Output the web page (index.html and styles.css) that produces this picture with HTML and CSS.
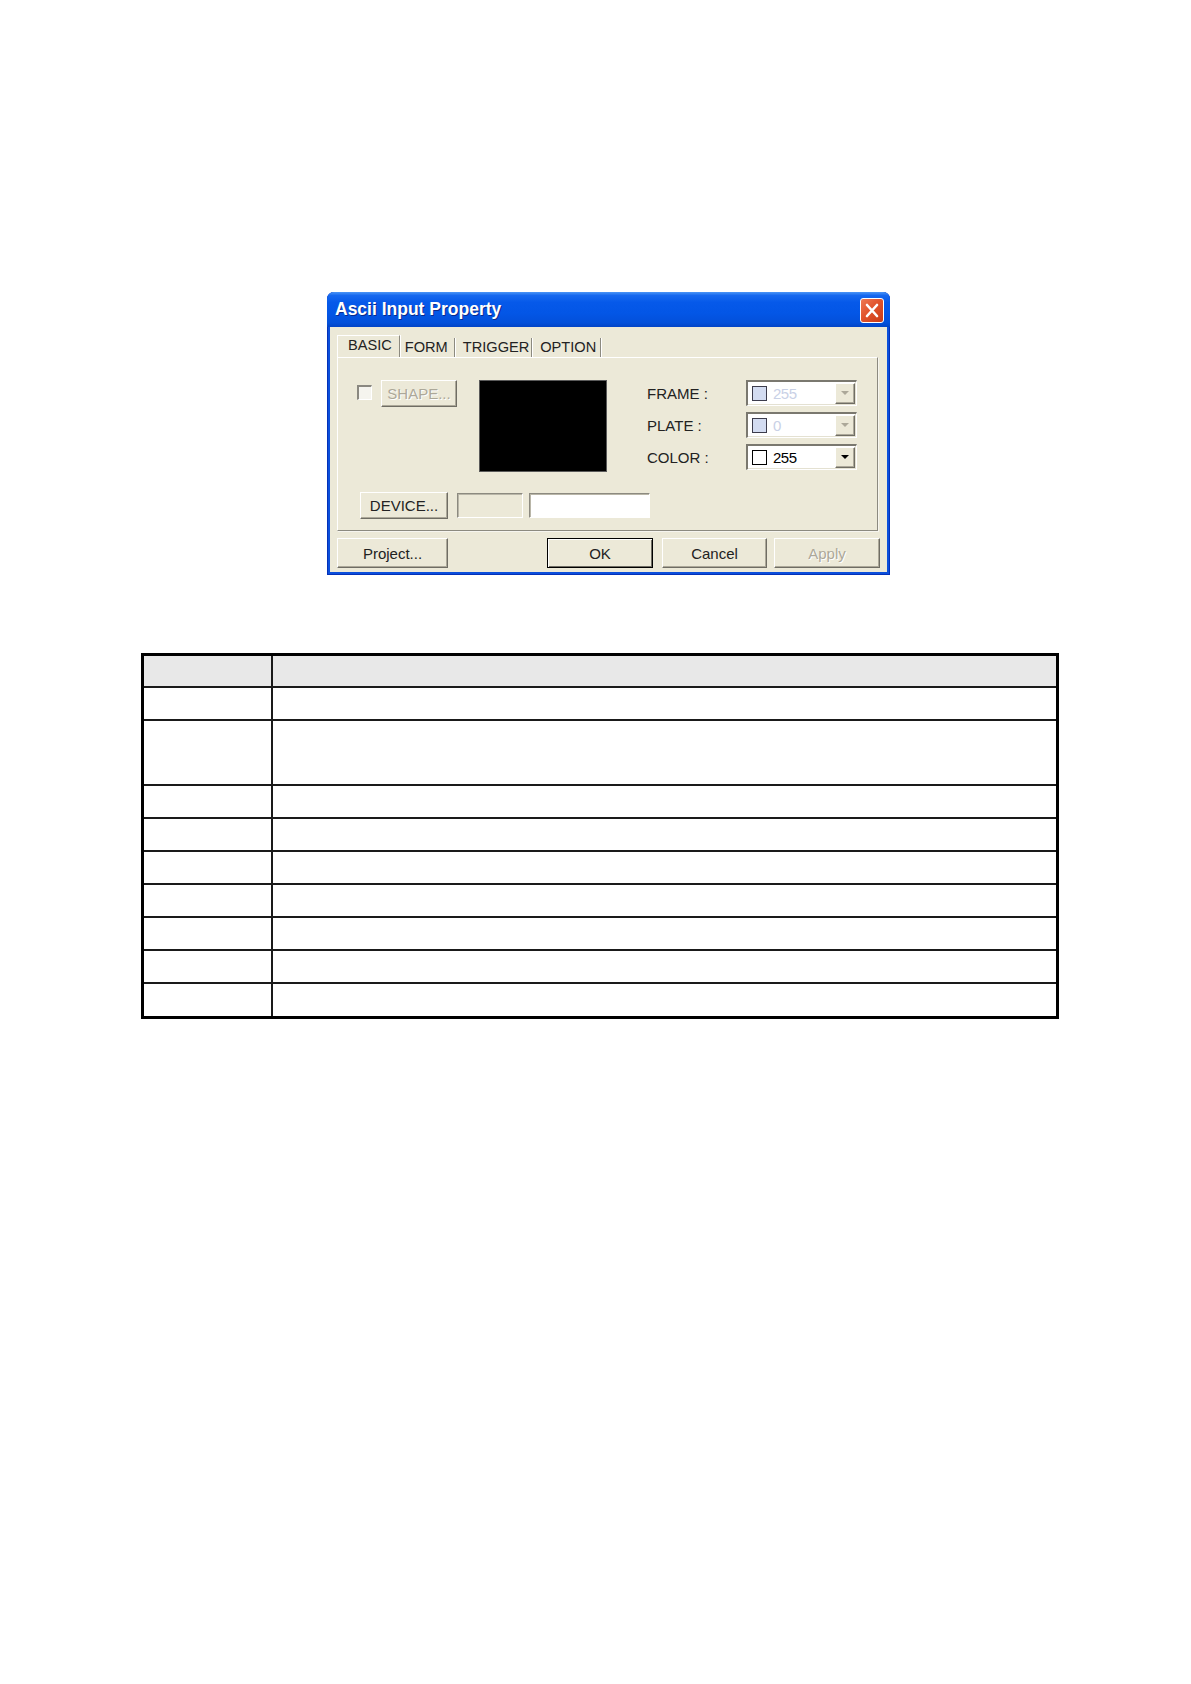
FILE: index.html
```html
<!DOCTYPE html>
<html>
<head>
<meta charset="utf-8">
<title>Ascii Input Property</title>
<link rel="stylesheet" href="styles.css">
</head>
<body>
<div class="page">
  <div class="dialog">
    <div class="titlebar">
      <span class="title">Ascii Input Property</span>
      <span class="close">
        <svg width="22" height="23" viewBox="0 0 22 23"><path d="M6 6 L16 17 M16 6 L6 17" stroke="#fff" stroke-width="2.6" stroke-linecap="round" fill="none"/></svg>
      </span>
    </div>
    <div class="body">
      <div class="tabs">
        <span class="tab tab-basic active">BASIC</span>
        <span class="tab tab-form">FORM</span>
        <span class="tab tab-trigger">TRIGGER</span>
        <span class="tab tab-option">OPTION</span>
      </div>
      <div class="panel">
        <div class="toprow">
          <span class="check"></span>
          <span class="btn disabled shape">SHAPE...</span>
          <div class="preview"></div>
          <div class="props">
            <span class="lbl">FRAME :</span>
            <div class="combo disabled"><span class="swatch"></span><span class="val">255</span><span class="drop"><svg width="8" height="5" viewBox="0 0 8 5"><path d="M0 0 H8 L4 4 Z" fill="#aca899"/></svg></span></div>
            <span class="lbl">PLATE :</span>
            <div class="combo disabled"><span class="swatch"></span><span class="val">0</span><span class="drop"><svg width="8" height="5" viewBox="0 0 8 5"><path d="M0 0 H8 L4 4 Z" fill="#aca899"/></svg></span></div>
            <span class="lbl">COLOR :</span>
            <div class="combo"><span class="swatch"></span><span class="val">255</span><span class="drop"><svg width="8" height="5" viewBox="0 0 8 5"><path d="M0 0 H8 L4 4 Z" fill="#000"/></svg></span></div>
          </div>
        </div>
        <div class="devrow">
          <span class="btn device">DEVICE...</span>
          <span class="field field-gray"></span>
          <span class="field field-white"></span>
        </div>
      </div>
      <div class="btnrow">
        <span class="btn project">Project...</span>
        <span class="btn ok">OK</span>
        <span class="btn cancel">Cancel</span>
        <span class="btn disabled apply">Apply</span>
      </div>
    </div>
  </div>

  <div class="grid">
    <div class="cell head first"></div><div class="cell head"></div>
    <div class="cell first"></div><div class="cell"></div>
    <div class="cell first tall"></div><div class="cell tall"></div>
    <div class="cell first"></div><div class="cell"></div>
    <div class="cell first"></div><div class="cell"></div>
    <div class="cell first"></div><div class="cell"></div>
    <div class="cell first"></div><div class="cell"></div>
    <div class="cell first"></div><div class="cell"></div>
    <div class="cell first"></div><div class="cell"></div>
    <div class="cell first last"></div><div class="cell last"></div>
  </div>
</div>
</body>
</html>
```

FILE: styles.css
```css
* { box-sizing: border-box; }

html, body {
  margin: 0;
  padding: 0;
  background: #ffffff;
}

body {
  font-family: "Liberation Sans", Arial, sans-serif;
  font-size: 15px;
  color: #000;
}

.page {
  padding-top: 292px;
  width: 1191px;
}

/* ---------- dialog ---------- */
.dialog {
  margin-left: 327px;
  width: 563px;
  height: 283px;
  background: #0b4fdb;
  border-radius: 7px 7px 0 0;
  display: flex;
  flex-direction: column;
  box-shadow: inset 1px 0 0 #0431b8, inset -1px 0 0 #0431b8, inset 0 -1px 0 #0431b8;
}

.titlebar {
  height: 35px;
  flex: none;
  display: flex;
  align-items: center;
  justify-content: space-between;
  padding: 0 6px 0 8px;
  border-radius: 7px 7px 0 0;
  background: linear-gradient(#4b95f6 0%, #1668ef 10%, #0659e9 30%, #0356e6 60%, #0350da 88%, #0244c6 100%);
}

.title {
  color: #fff;
  font-weight: bold;
  font-size: 17.5px;
  text-shadow: 1px 1px 0 #0a2a8c;
}

.close {
  width: 24px;
  height: 25px;
  margin-top: 1px;
  border: 1px solid #fff;
  border-radius: 3px;
  background: linear-gradient(135deg, #ee7a55 0%, #e1542d 45%, #c93a16 100%);
  display: flex;
  align-items: center;
  justify-content: center;
}

.body {
  margin: 0 3px 3px 3px;
  height: 245px;
  background: #ece9d8;
  padding: 8px 0 0 7px;
  color: #222;
}

/* ---------- tabs ---------- */
.tabs {
  height: 22px;
  display: flex;
  align-items: flex-end;
}

.tab {
  height: 19px;
  line-height: 17px;
  padding-top: 1px;
  font-size: 14.6px;
  color: #222;
  border-right: 1px solid #8c8a80;
  box-shadow: 1px 0 0 #ffffff;
  white-space: nowrap;
}

.tab.active {
  height: 22px;
  padding-top: 1px;
  border-left: 1px solid #ffffff;
  border-top: 1px solid #ffffff;
  border-right: 1px solid #8c8a80;
}

.tab-basic { padding-left: 10px; padding-right: 7px; }
.tab-form { padding-left: 5px; padding-right: 6px; }
.tab-trigger { padding-left: 8px; padding-right: 2px; }
.tab-option { padding-left: 8px; padding-right: 4px; }

/* ---------- panel ---------- */
.panel {
  width: 541px;
  height: 174px;
  border: 1px solid;
  border-color: #ffffff #8c8a80 #8c8a80 #ffffff;
  box-shadow: 1px 1px 0 #f6f5ef;
  padding-top: 22px;
}

.toprow {
  display: flex;
  align-items: flex-start;
}

.check {
  width: 15px;
  height: 15px;
  margin-left: 19px;
  margin-top: 5px;
  border-style: solid;
  border-width: 2px 1px 1px 2px;
  border-color: #8a8880 #ffffff #ffffff #8a8880;
  background: #f5f4ee;
}

.btn {
  display: inline-flex;
  align-items: center;
  justify-content: center;
  background: #ece9d8;
  border: 1px solid;
  border-color: #ffffff #6f6d64 #6f6d64 #ffffff;
  box-shadow: inset -1px -1px 0 #aca899;
  color: #222;
  white-space: nowrap;
  flex: none;
}

.btn.disabled {
  color: #aca899;
  text-shadow: 1px 1px 0 #ffffff;
}

.shape {
  margin-left: 9px;
  width: 76px;
  height: 27px;
}

.preview {
  margin-left: 22px;
  width: 128px;
  height: 92px;
  background: #000;
  border: 1px solid #5a5a5a;
  flex: none;
}

.props {
  margin-left: 40px;
  display: grid;
  grid-template-columns: 99px 111px;
  grid-auto-rows: 26px;
  row-gap: 6px;
  align-items: center;
}

.lbl {
  color: #222;
  white-space: nowrap;
}

.combo {
  height: 26px;
  display: flex;
  align-items: center;
  background: #ffffff;
  border-style: solid;
  border-width: 2px 1px 1px 2px;
  border-color: #7a786f #ffffff #ffffff #7a786f;
  box-shadow: inset -1px -1px 0 #e4e1d2;
}

.swatch {
  width: 15px;
  height: 15px;
  margin-left: 4px;
  border: 1px solid #000;
  background: #fff;
  flex: none;
}

.combo.disabled .swatch {
  border-color: #3c3c4c;
  background: #d3dcf1;
}

.val {
  margin-left: 6px;
  font-size: 15px;
  letter-spacing: -0.5px;
  color: #000;
}

.combo.disabled .val {
  color: #c9d1e6;
}

.drop {
  margin-left: auto;
  margin-right: 1px;
  width: 20px;
  height: 21px;
  display: flex;
  align-items: center;
  justify-content: center;
  background: #ece9d8;
  border: 1px solid;
  border-color: #ffffff #6f6d64 #6f6d64 #ffffff;
  box-shadow: inset -1px -1px 0 #aca899;
}

.devrow {
  display: flex;
  align-items: flex-start;
  margin-top: 20px;
  padding-left: 22px;
}

.device {
  width: 88px;
  height: 27px;
}

.field {
  height: 25px;
  margin-top: 1px;
  border: 1px solid;
  border-color: #8c8a80 #ffffff #ffffff #8c8a80;
  box-shadow: inset 1px 1px 0 #b9b6a8;
  flex: none;
}

.field-gray {
  margin-left: 9px;
  width: 66px;
  background: #ece9d8;
}

.field-white {
  margin-left: 6px;
  width: 121px;
  background: #ffffff;
}

/* ---------- bottom buttons ---------- */
.btnrow {
  display: flex;
  margin-top: 7px;
}

.btnrow .btn {
  height: 30px;
}

.project { width: 111px; }

.ok {
  margin-left: 99px;
  width: 106px;
  border: 1px solid #000;
  box-shadow: inset 1px 1px 0 #ffffff, inset -1px -1px 0 #6f6d64;
}

.cancel {
  margin-left: 9px;
  width: 105px;
}

.apply {
  margin-left: 7px;
  width: 106px;
}

/* ---------- empty table ---------- */
.grid {
  margin-top: 78px;
  margin-left: 141px;
  width: 918px;
  border: 3px solid #000;
  display: grid;
  grid-template-columns: 129px 1fr;
}

.cell {
  height: 33px;
  border-bottom: 2px solid #1a1a1a;
  background: #fff;
}

.cell.first {
  border-right: 2px solid #1a1a1a;
}

.cell.head {
  height: 32px;
  background: #e8e8e8;
}

.cell.tall {
  height: 65px;
}

.cell.last {
  height: 32px;
  border-bottom: 0;
}
```
